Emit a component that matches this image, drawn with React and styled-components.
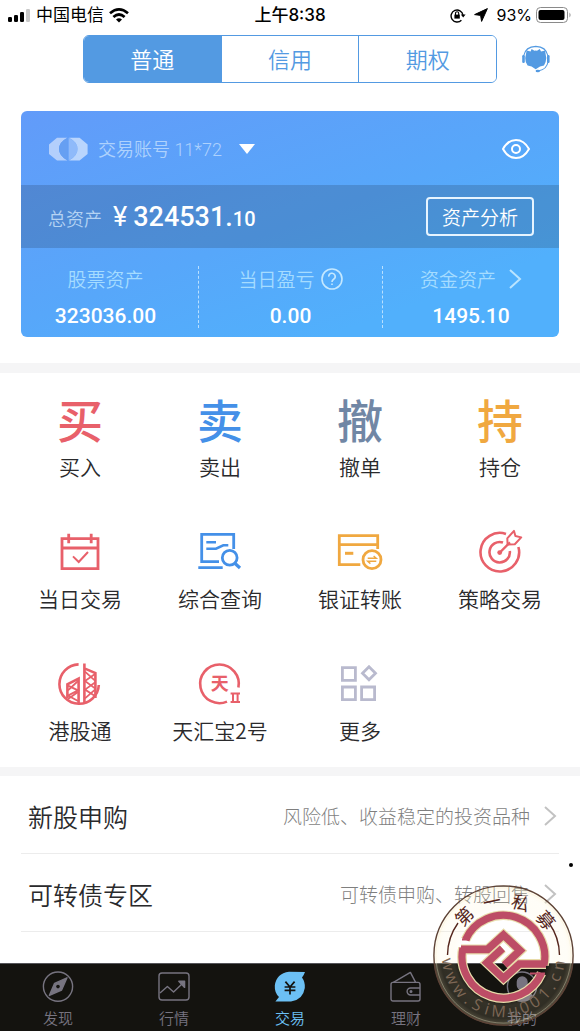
import React from 'react';
import styled, { createGlobalStyle } from 'styled-components';

const GlobalStyle = createGlobalStyle`
  * { box-sizing: border-box; }
  body {
    margin: 0;
    background: #fff;
    color: #2a2a2c;
    font-family: "Noto Sans CJK SC", sans-serif;
    font-weight: 350;
  }
  button { font: inherit; color: inherit; background: none; border: 0; padding: 0; cursor: pointer; }
  a { color: inherit; text-decoration: none; }
  svg { display: block; flex: none; }
`;

const Screen = styled.div`
  position: relative;
  min-height: 100vh;
  display: flex;
  flex-direction: column;
`;

const StatusBar = styled.div`
  display: grid;
  grid-template-columns: 1fr auto 1fr;
  align-items: center;
  height: 29px;
  padding: 0 8px;
  color: #000;
  font-size: 17px;
  line-height: 29px;
  font-weight: 400;
`;

const StatusGroup = styled.div`
  display: flex;
  align-items: center;
  gap: ${(p) => p.$gap}px;
  justify-content: ${(p) => (p.$end ? 'flex-end' : 'flex-start')};
  font-family: Inter, "Noto Sans CJK SC", sans-serif;
`;

const Percent = styled.span`
  font-size: 16px;
`;

const Clock = styled.div`
  padding-top: 1px;
  font-family: Inter, "Noto Sans CJK SC", sans-serif;
  font-weight: 500;
`;

const Header = styled.header`
  display: flex;
  align-items: center;
  gap: 25px;
  padding: 6px 30px 28px 83px;
`;

const Segments = styled.div`
  flex: 1;
  display: flex;
  height: 48px;
  border: 1px solid #539ae2;
  border-radius: 6px;
  overflow: hidden;
`;

const Segment = styled.button`
  flex: 1;
  padding-bottom: 2px;
  font-size: 22px;
  line-height: 44px;
  color: ${(p) => (p.$active ? '#fff' : '#539ae2')};
  background: ${(p) => (p.$active ? '#539ae2' : '#fff')};
  & + & { border-left: 1px solid #539ae2; }
`;

const AssetCard = styled.section`
  margin: 0 21px 26px;
  border-radius: 6px;
  overflow: hidden;
  color: #fff;
  background: linear-gradient(160deg, #629bf9 0%, #57a7fa 50%, #51b0fc 80%);
`;

const AccountRow = styled.div`
  display: flex;
  align-items: center;
  justify-content: space-between;
  height: 74px;
  padding: 2px 29px 0 27px;
`;

const AccountPicker = styled.button`
  display: flex;
  align-items: center;
  gap: 10px;
  font-family: Roboto, "Noto Sans CJK SC", sans-serif;
  font-size: 18px;
  line-height: 26px;
  color: #aed2fd;
  svg:last-child { margin-left: 7px; }
`;

const AccountName = styled.span`
  padding-top: 2px;
`;

const TotalRow = styled.div`
  display: flex;
  align-items: center;
  justify-content: space-between;
  height: 63px;
  padding: 0 25px 0 27px;
  background: rgba(20, 30, 40, 0.18);
`;

const Total = styled.div`
  display: flex;
  align-items: baseline;
  padding-top: 4px;
  font-family: Roboto, "Noto Sans CJK SC", sans-serif;
  font-size: 18px;
  line-height: 36px;
`;

const TotalLabel = styled.span`
  color: #b4d3f3;
  margin-right: 11px;
`;

const Yen = styled.span`
  font-size: 27px;
  font-weight: 400;
  margin-right: 6px;
`;

const Whole = styled.span`
  font-size: 27px;
  font-weight: 500;
`;

const Cents = styled.span`
  font-size: 20px;
  font-weight: 500;
`;

const OutlineButton = styled.button`
  height: 39px;
  padding: 0 14px;
  border: 2px solid #e6f4ff;
  border-radius: 4px;
  font-size: 19px;
  line-height: 34px;
`;

const Stats = styled.div`
  display: grid;
  grid-template-columns: 177fr 184fr 177fr;
  padding: 18px 0 9px;
`;

const Stat = styled.div`
  display: flex;
  flex-direction: column;
  align-items: center;
  gap: 12px;
  &:first-child { padding-right: 8px; }
  & + & { border-left: 1px dashed #b9e0ff; }
`;

const StatLabel = styled.div`
  display: flex;
  align-items: center;
  gap: ${(p) => p.$gap || 6}px;
  font-size: 19px;
  line-height: 26px;
  color: #a5dcff;
`;

const StatValue = styled.div`
  font-family: Roboto, sans-serif;
  font-size: 21px;
  font-weight: 500;
  line-height: 24px;
`;

const Divider = styled.div`
  height: ${(p) => p.$size}px;
  background: #f5f5f6;
`;

const Shortcuts = styled.section`
  display: grid;
  grid-template-columns: repeat(4, 1fr);
  row-gap: 48px;
  padding: 24px 10px 22px;
`;

const Shortcut = styled.button`
  display: flex;
  flex-direction: column;
  align-items: center;
  gap: 6px;
  font-size: 21px;
  line-height: 30px;
  white-space: nowrap;
`;

const Glyph = styled.span`
  height: 48px;
  font-size: 46px;
  line-height: 42px;
  font-weight: 500;
  color: ${(p) => p.$color};
`;

const Links = styled.main`
  flex: 1;
  padding: 0 21px 30px;
`;

const LinkRow = styled.a`
  display: flex;
  align-items: center;
  justify-content: space-between;
  height: 78px;
  padding: 2px 2px 0 7px;
  border-bottom: 1px solid #ececec;
`;

const LinkTitle = styled.span`
  font-size: 25px;
  line-height: 36px;
`;

const LinkNote = styled.span`
  display: flex;
  align-items: center;
  gap: 13px;
  font-size: 19px;
  line-height: 28px;
  font-weight: 300;
  color: #7f7f7f;
`;

const TabBar = styled.nav`
  display: grid;
  grid-template-columns: repeat(5, 1fr);
  height: 68px;
  padding-top: 7px;
  border-top: 1px solid #55555a;
  background: #14130f;
`;

const Tab = styled.a`
  display: flex;
  flex-direction: column;
  align-items: center;
  gap: 4px;
  font-size: 15px;
  line-height: 22px;
  color: ${(p) => (p.$active ? '#6cc0f4' : '#777480')};
`;

const Seal = styled.div`
  position: absolute;
  right: 6px;
  bottom: 5px;
  pointer-events: none;
`;

const Dot = styled.div`
  position: absolute;
  right: 7px;
  bottom: 164px;
  width: 4px;
  height: 4px;
  border-radius: 2px;
  background: #000;
`;

const Chevron = ({ color, width = 2 }) => (
  <svg width="14" height="22" viewBox="0 0 14 22" fill="none" stroke={color} strokeWidth={width} aria-hidden="true">
    <path d="M2 2 L12 11 L2 20" />
  </svg>
);

const SignalIcon = () => (
  <svg width="23" height="15" viewBox="0 0 23 15" aria-hidden="true">
    <rect x="0" y="9" width="4" height="5" rx="1.3" />
    <rect x="6" y="7" width="4" height="7" rx="1.3" />
    <rect x="12" y="4" width="4" height="10" rx="1.3" />
    <rect x="18" y="1" width="4" height="13" rx="1.3" fill="#c8c8c8" />
  </svg>
);

const WifiIcon = () => (
  <svg width="20" height="15" viewBox="0 0 20 15" fill="none" stroke="#000" strokeWidth="2.7" aria-hidden="true">
    <path d="M1 5.3 Q10 -2.4 19 5.3" />
    <path d="M4.4 9 Q10 4 15.6 9" />
    <path d="M7 11.4 Q10 9 13 11.4 L10 14.5 Z" fill="#000" stroke="none" />
  </svg>
);

const LockIcon = () => (
  <svg width="16" height="15" viewBox="0 0 16 15" fill="none" stroke="#000" strokeWidth="1.4" aria-hidden="true">
    <path d="M11.4 12.2 A6 6 0 1 1 13 7" />
    <path d="M10.8 6.6 H15.6 L13.2 9.6 Z" fill="#000" stroke="none" />
    <rect x="4.4" y="6.6" width="5.4" height="4" fill="#000" stroke="none" />
    <path d="M5.5 7 V5.3 A1.6 1.6 0 0 1 8.7 5.3 V7" strokeWidth="1.1" />
  </svg>
);

const LocationIcon = () => (
  <svg width="14" height="14" viewBox="0 0 14 14" aria-hidden="true">
    <path d="M13.4 0.6 L0.6 6.6 L6.6 7.4 L7.6 13.4 Z" stroke="#000" strokeWidth="1" strokeLinejoin="round" />
  </svg>
);

const BatteryIcon = () => (
  <svg width="36" height="16" viewBox="0 0 36 16" aria-hidden="true">
    <rect x="0.5" y="0.5" width="31" height="15" rx="4" fill="#fff" stroke="#8a8a8a" />
    <rect x="2.5" y="3" width="26" height="10" rx="2" />
    <path d="M33.5 5.5 Q35.6 8 33.5 10.5 Z" fill="#8a8a8a" />
  </svg>
);

const ServiceIcon = () => (
  <svg width="28" height="28" viewBox="0 0 28 28" fill="none" stroke="#539ae2" aria-hidden="true">
    <path d="M4 9 L4.6 5.6 L8.6 6.4 L9.6 4 L12.4 5.8 Q13.7 5.4 15 5.8 L17.8 4 L19 6.4 L23.2 5.6 L23.6 9 Q25 13 23.6 17 L22 20.4 L18 21.6 L13.7 24.2 L9.6 21.6 L5.6 20.4 L3.8 17 Q2.6 13 4 9 Z" fill="#539ae2" stroke="none" />
    <path d="M1.6 11 Q3.5 1.6 13.8 1.4 Q24 1.6 26 11" strokeWidth="1.1" />
    <rect x="0.2" y="10" width="2.6" height="8" rx="1.2" fill="#539ae2" stroke="none" />
    <rect x="25" y="10" width="2.6" height="8" rx="1.2" fill="#539ae2" stroke="none" />
    <path d="M26 17 Q24.6 24.4 17 25.8" strokeWidth="1.1" />
    <ellipse cx="15.8" cy="26" rx="2.2" ry="1.3" fill="#539ae2" stroke="none" />
  </svg>
);

const BrokerLogo = () => (
  <svg width="40" height="24" viewBox="0 0 40 24" aria-hidden="true">
    <path d="M1 7.4 L9 0.7 H19.4 Q11 5 11 12 Q11 19 19.4 23.4 H9 L1 17 Z" fill="#b3cffc" />
    <path d="M19.8 0.7 Q11 5 11 12 Q11 19 19.8 23.4 Z" fill="#669ff2" />
    <path d="M20.6 0.7 Q29.6 5 29.6 12 Q29.6 19 20.6 23.4 Z" fill="#8fbafa" />
    <path d="M39.6 7.4 L31.6 0.7 H21 Q29.6 5 29.6 12 Q29.6 19 21 23.4 H31.6 L39.6 17 Z" fill="#b9d5fd" />
  </svg>
);

const EyeIcon = () => (
  <svg width="28" height="20" viewBox="0 0 28 20" fill="none" stroke="#fff" strokeWidth="2" aria-hidden="true">
    <path d="M1 10 Q6 1 14 1 Q22 1 27 10 Q22 19 14 19 Q6 19 1 10 Z" />
    <circle cx="14" cy="10" r="4" />
  </svg>
);

const HelpIcon = () => (
  <svg width="22" height="22" viewBox="0 0 22 22" fill="none" stroke="#c4e8ff" strokeWidth="1.6" aria-hidden="true">
    <circle cx="11" cy="11" r="10" />
    <path d="M7.8 8.6 A3.2 3.2 0 1 1 12.6 11.2 Q11 12.2 11 14" />
    <path d="M11 15.4 V17" />
  </svg>
);

const Art = ({ color, children, width = 2.8 }) => (
  <svg width="48" height="48" viewBox="0 0 48 48" fill="none" stroke={color} strokeWidth={width} aria-hidden="true">
    {children}
  </svg>
);

const RED = '#e8606a';
const BLUE = '#4490e8';
const AMBER = '#f0a840';

const CalendarArt = () => (
  <Art color={RED}>
    <path d="M6 9.7 H42 V39.7 H6 Z M6 19 H42 M12.7 4.7 V14.3 M35.2 4.7 V14.3" />
    <path d="M17 27.4 L22.7 33 L32 23" strokeWidth="2" />
  </Art>
);

const QueryArt = () => (
  <Art color={BLUE}>
    <path d="M23 32.7 H5.7 V5.3 H37.7 V20 M2.3 38.7 H26.7" />
    <path d="M10.3 13.3 H20 M10.3 19.7 H20 L27.3 16.3 H32.3" strokeWidth="2.5" />
    <circle cx="33.7" cy="28.7" r="7.4" />
    <path d="M38.8 34.2 L44 39" strokeWidth="3.2" />
  </Art>
);

const TransferArt = () => (
  <Art color={AMBER}>
    <path d="M24.3 35.7 H3.3 V6.7 H41.7 V20 M3.3 15.7 H41.7" />
    <path d="M9 24.3 H17.3" strokeWidth="3" />
    <circle cx="36" cy="30.7" r="9" />
    <path d="M31.7 29.3 H40.3 L37.6 27 M40.3 32.3 H31.7 L34.4 34.6" strokeWidth="1.4" />
  </Art>
);

const TargetArt = () => (
  <Art color={RED} width={2.6}>
    <path d="M30 4.9 A19.3 19.3 0 1 0 42.4 18" />
    <path d="M27 13.6 A10.2 10.2 0 1 0 33.8 22" />
    <circle cx="23.7" cy="23.6" r="2.4" fill={RED} stroke="none" />
    <path d="M23.7 23.6 L34 13.4" strokeWidth="2.2" />
    <path d="M31.6 15.6 L31.3 9.3 L38 1.9 L39.4 7 L45.2 8.4 L38.8 15.2 Z" strokeWidth="2" strokeLinejoin="round" />
  </Art>
);

const TowersArt = () => (
  <Art color={RED} width={2.6}>
    <path d="M22.6 3.4 A19.7 19.7 0 1 0 42.8 24" />
    <path d="M11.4 37 V23.4 L22.6 17.6 V42" />
    <path d="M12 24.6 L22 29.4 L12 34.6 L22 40 M22 20 L12 29.4 M22 31 L12 38" strokeWidth="1.8" />
    <path d="M28.4 2.4 V42 M28.4 7.4 L39.4 12 V37" />
    <path d="M29 10.6 L39 19.6 M39 13 L29 20 L39 27.4 M39 21.4 L29 28.6 L39 35 M39 28.6 L29 37.4" strokeWidth="1.8" />
  </Art>
);

const FundMark = styled.text`
  font-family: "Noto Sans CJK SC", sans-serif;
  font-size: 18px;
  font-weight: 700;
`;

const FundArt = () => (
  <Art color={RED} width={2.6}>
    <path d="M42.4 26.6 A19.3 19.3 0 1 0 31 40.6" />
    <FundMark x="23.7" y="28.8" textAnchor="middle" fill={RED} stroke="none">天</FundMark>
    <path d="M34.6 32.6 H44 M34.6 41 H44 M37 32.6 V41 M41.6 32.6 V41" strokeWidth="2" />
  </Art>
);

const MoreArt = () => (
  <Art color="#b9bace">
    <path d="M6.4 6.7 H19.4 V19.3 H6.4 Z M6.4 26 H19.4 V38.7 H6.4 Z M25.6 26 H38.6 V38.7 H25.6 Z M33 5.8 L39.5 12.3 L33 18.8 L26.5 12.3 Z" />
  </Art>
);

const TabArt = ({ children }) => (
  <svg width="32" height="32" viewBox="0 0 32 32" fill="none" stroke="currentColor" strokeWidth="1.4" strokeLinejoin="round" aria-hidden="true">
    {children}
  </svg>
);

const CompassArt = () => (
  <TabArt>
    <circle cx="16" cy="15.6" r="14.6" />
    <path d="M25 6.8 L19.6 19 L7.4 24.4 L12.6 12.4 Z" fill="currentColor" />
    <circle cx="16" cy="15.6" r="1.8" fill="#14130f" stroke="none" />
  </TabArt>
);

const TrendArt = () => (
  <TabArt>
    <rect x="1" y="2" width="30" height="27" rx="3" />
    <path d="M2 22 L9.4 15.4 L15.6 21 L25 12" />
    <path d="M20.8 10.2 H26.6 V16.4 Z" fill="currentColor" />
  </TabArt>
);

const TradeArt = () => (
  <TabArt>
    <path d="M31 1 Q30 4 28 6.4 Q31.4 11 30.8 17 Q29 29 17 30.4 L1.4 30.6 L5 26 Q0.4 22 0.8 14.6 Q2.4 2.4 15 0.8 Z" fill="currentColor" stroke="none" />
    <path d="M11.4 10.6 L16 16 L20.6 10.6 M10.6 16 H21.4 M10.6 19.4 H21.4 M16 16 V23.4" stroke="#14130f" strokeWidth="1.7" />
  </TabArt>
);

const WalletArt = () => (
  <TabArt>
    <rect x="1" y="11.4" width="29" height="18.6" rx="2" />
    <path d="M3.4 11.4 L20.4 1.4 L25.6 11.4" />
    <path d="M30 17 H20.6 A3.5 3.5 0 0 0 20.6 24 H30" />
    <circle cx="21" cy="20.5" r="0.8" fill="currentColor" />
  </TabArt>
);

const ProfileArt = () => (
  <TabArt>
    <circle cx="16" cy="15.6" r="14.6" />
    <rect x="11.4" y="6" width="9.6" height="13" rx="4.8" fill="currentColor" />
    <path d="M6 24.6 Q10 19.6 16 19.6 Q22 19.6 26 24.6 Q22 29.6 16 29.6 Q10 29.6 6 24.6 Z" fill="currentColor" />
  </TabArt>
);

const SealText = styled.text`
  font-family: ${(p) => (p.$latin ? '"Open Sans", sans-serif' : '"Liberation Serif", "Noto Sans CJK SC", serif')};
  font-size: ${(p) => (p.$latin ? 16 : 18)}px;
  font-weight: 400;
  fill: ${(p) => (p.$latin ? '#7d6755' : '#55261d')};
  text-anchor: middle;
`;

const SEAL_TOP = [['第', -45], ['一', -12], ['私', 18], ['募', 50]];
const SEAL_BOTTOM = [
  ['w', 81], ['w', 66], ['w', 51], ['.', 39], ['S', 28], ['i', 17], ['M', 5],
  ['u', -10], ['0', -22], ['0', -34], ['1', -47], ['.', -57], ['c', -67], ['n', -80],
];

const SEAL_ARCS = 'M32.5 54.7 A41.5 41.5 0 0 1 111 80 M29.9 63 A41.5 41.5 0 0 0 108.5 88.3';
const SEAL_BANDS = 'M28 64.4 H54.6 L70.5 50 L87 65.6 L71.5 80 M113 79 H86.4 L70.5 93.4 L54 77.8 L69.5 63.4';
const SEAL_ENDS = 'M29 54.6 H37 M97 88.4 H112';

const SealArt = () => (
  <svg width="141" height="141" viewBox="0 0 141 141" fill="none" aria-hidden="true">
    <defs>
      <radialGradient id="sealGlow">
        <stop offset="0.6" stopColor="#fff0c0" stopOpacity="0" />
        <stop offset="0.72" stopColor="#fff0c0" stopOpacity="0.14" />
        <stop offset="0.9" stopColor="#fff0c0" stopOpacity="0.12" />
        <stop offset="1" stopColor="#fff0c0" stopOpacity="0.28" />
      </radialGradient>
    </defs>
    <circle cx="70.5" cy="70.5" r="70" fill="url(#sealGlow)" />
    <circle cx="70.5" cy="70.5" r="69.6" stroke="#5d4236" strokeWidth="1.4" />
    <circle cx="70.5" cy="70.5" r="67.6" stroke="#f3e8c8" strokeOpacity="0.35" />
    <path d="M14.5 70 A56 56 0 0 1 25 38 M116 38 A56 56 0 0 1 126.5 70" stroke="#55261d" strokeWidth="1.4" />
    <path d={SEAL_ARCS} stroke="#e8dcaa" strokeWidth="9.6" />
    <path d={SEAL_BANDS} stroke="#e8dcaa" strokeWidth="10" />
    <path d={SEAL_ARCS} stroke="#bd4d66" strokeWidth="7.2" />
    <path d={SEAL_BANDS} stroke="#bd4d66" strokeWidth="7.6" />
    <path d={SEAL_ENDS} stroke="#bd4d66" strokeWidth="2" />
    {SEAL_TOP.map(([char, angle]) => (
      <SealText key={char} x="70.5" y="22" transform={`rotate(${angle} 70.5 70.5)`}>{char}</SealText>
    ))}
    {SEAL_BOTTOM.map(([char, angle], i) => (
      <SealText key={i} $latin x="70.5" y="132" transform={`rotate(${angle} 70.5 70.5)`}>{char}</SealText>
    ))}
  </svg>
);

const shortcuts = [
  { label: '买入', art: <Glyph $color={RED}>买</Glyph> },
  { label: '卖出', art: <Glyph $color={BLUE}>卖</Glyph> },
  { label: '撤单', art: <Glyph $color="#7187a5">撤</Glyph> },
  { label: '持仓', art: <Glyph $color={AMBER}>持</Glyph> },
  { label: '当日交易', art: <CalendarArt /> },
  { label: '综合查询', art: <QueryArt /> },
  { label: '银证转账', art: <TransferArt /> },
  { label: '策略交易', art: <TargetArt /> },
  { label: '港股通', art: <TowersArt /> },
  { label: '天汇宝2号', art: <FundArt /> },
  { label: '更多', art: <MoreArt /> },
];

const links = [
  { title: '新股申购', note: '风险低、收益稳定的投资品种' },
  { title: '可转债专区', note: '可转债申购、转股回售' },
];

const tabs = [
  { label: '发现', art: <CompassArt /> },
  { label: '行情', art: <TrendArt /> },
  { label: '交易', art: <TradeArt />, active: true },
  { label: '理财', art: <WalletArt /> },
  { label: '我的', art: <ProfileArt /> },
];

export default function App() {
  return (
    <Screen>
      <GlobalStyle />
      <StatusBar>
        <StatusGroup $gap={5}>
          <SignalIcon />
          <span>中国电信</span>
          <WifiIcon />
        </StatusGroup>
        <Clock>上午8:38</Clock>
        <StatusGroup $gap={8} $end>
          <LockIcon />
          <LocationIcon />
          <StatusGroup $gap={4}>
            <Percent>93%</Percent>
            <BatteryIcon />
          </StatusGroup>
        </StatusGroup>
      </StatusBar>

      <Header>
        <Segments>
          <Segment $active>普通</Segment>
          <Segment>信用</Segment>
          <Segment>期权</Segment>
        </Segments>
        <button aria-label="客服"><ServiceIcon /></button>
      </Header>

      <AssetCard>
        <AccountRow>
          <AccountPicker>
            <BrokerLogo />
            <AccountName>交易账号 11*72</AccountName>
            <svg width="16" height="10" viewBox="0 0 16 10" aria-hidden="true">
              <path d="M0 0 H16 L8 10 Z" fill="#fff" />
            </svg>
          </AccountPicker>
          <button aria-label="隐藏金额"><EyeIcon /></button>
        </AccountRow>
        <TotalRow>
          <Total>
            <TotalLabel>总资产</TotalLabel>
            <Yen>¥</Yen>
            <Whole>324531.</Whole>
            <Cents>10</Cents>
          </Total>
          <OutlineButton>资产分析</OutlineButton>
        </TotalRow>
        <Stats>
          <Stat>
            <StatLabel>股票资产</StatLabel>
            <StatValue>323036.00</StatValue>
          </Stat>
          <Stat>
            <StatLabel>当日盈亏<HelpIcon /></StatLabel>
            <StatValue>0.00</StatValue>
          </Stat>
          <Stat>
            <StatLabel $gap={12}>资金资产<Chevron color="#b9e4ff" /></StatLabel>
            <StatValue>1495.10</StatValue>
          </Stat>
        </Stats>
      </AssetCard>

      <Divider $size={10} />
      <Shortcuts>
        {shortcuts.map((item) => (
          <Shortcut key={item.label}>
            {item.art}
            <span>{item.label}</span>
          </Shortcut>
        ))}
      </Shortcuts>
      <Divider $size={9} />

      <Links>
        {links.map((item) => (
          <LinkRow key={item.title} href="#">
            <LinkTitle>{item.title}</LinkTitle>
            <LinkNote>{item.note}<Chevron color="#c2c2c2" /></LinkNote>
          </LinkRow>
        ))}
      </Links>

      <TabBar>
        {tabs.map((item) => (
          <Tab key={item.label} href="#" $active={item.active}>
            {item.art}
            <span>{item.label}</span>
          </Tab>
        ))}
      </TabBar>

      <Dot />
      <Seal><SealArt /></Seal>
    </Screen>
  );
}
